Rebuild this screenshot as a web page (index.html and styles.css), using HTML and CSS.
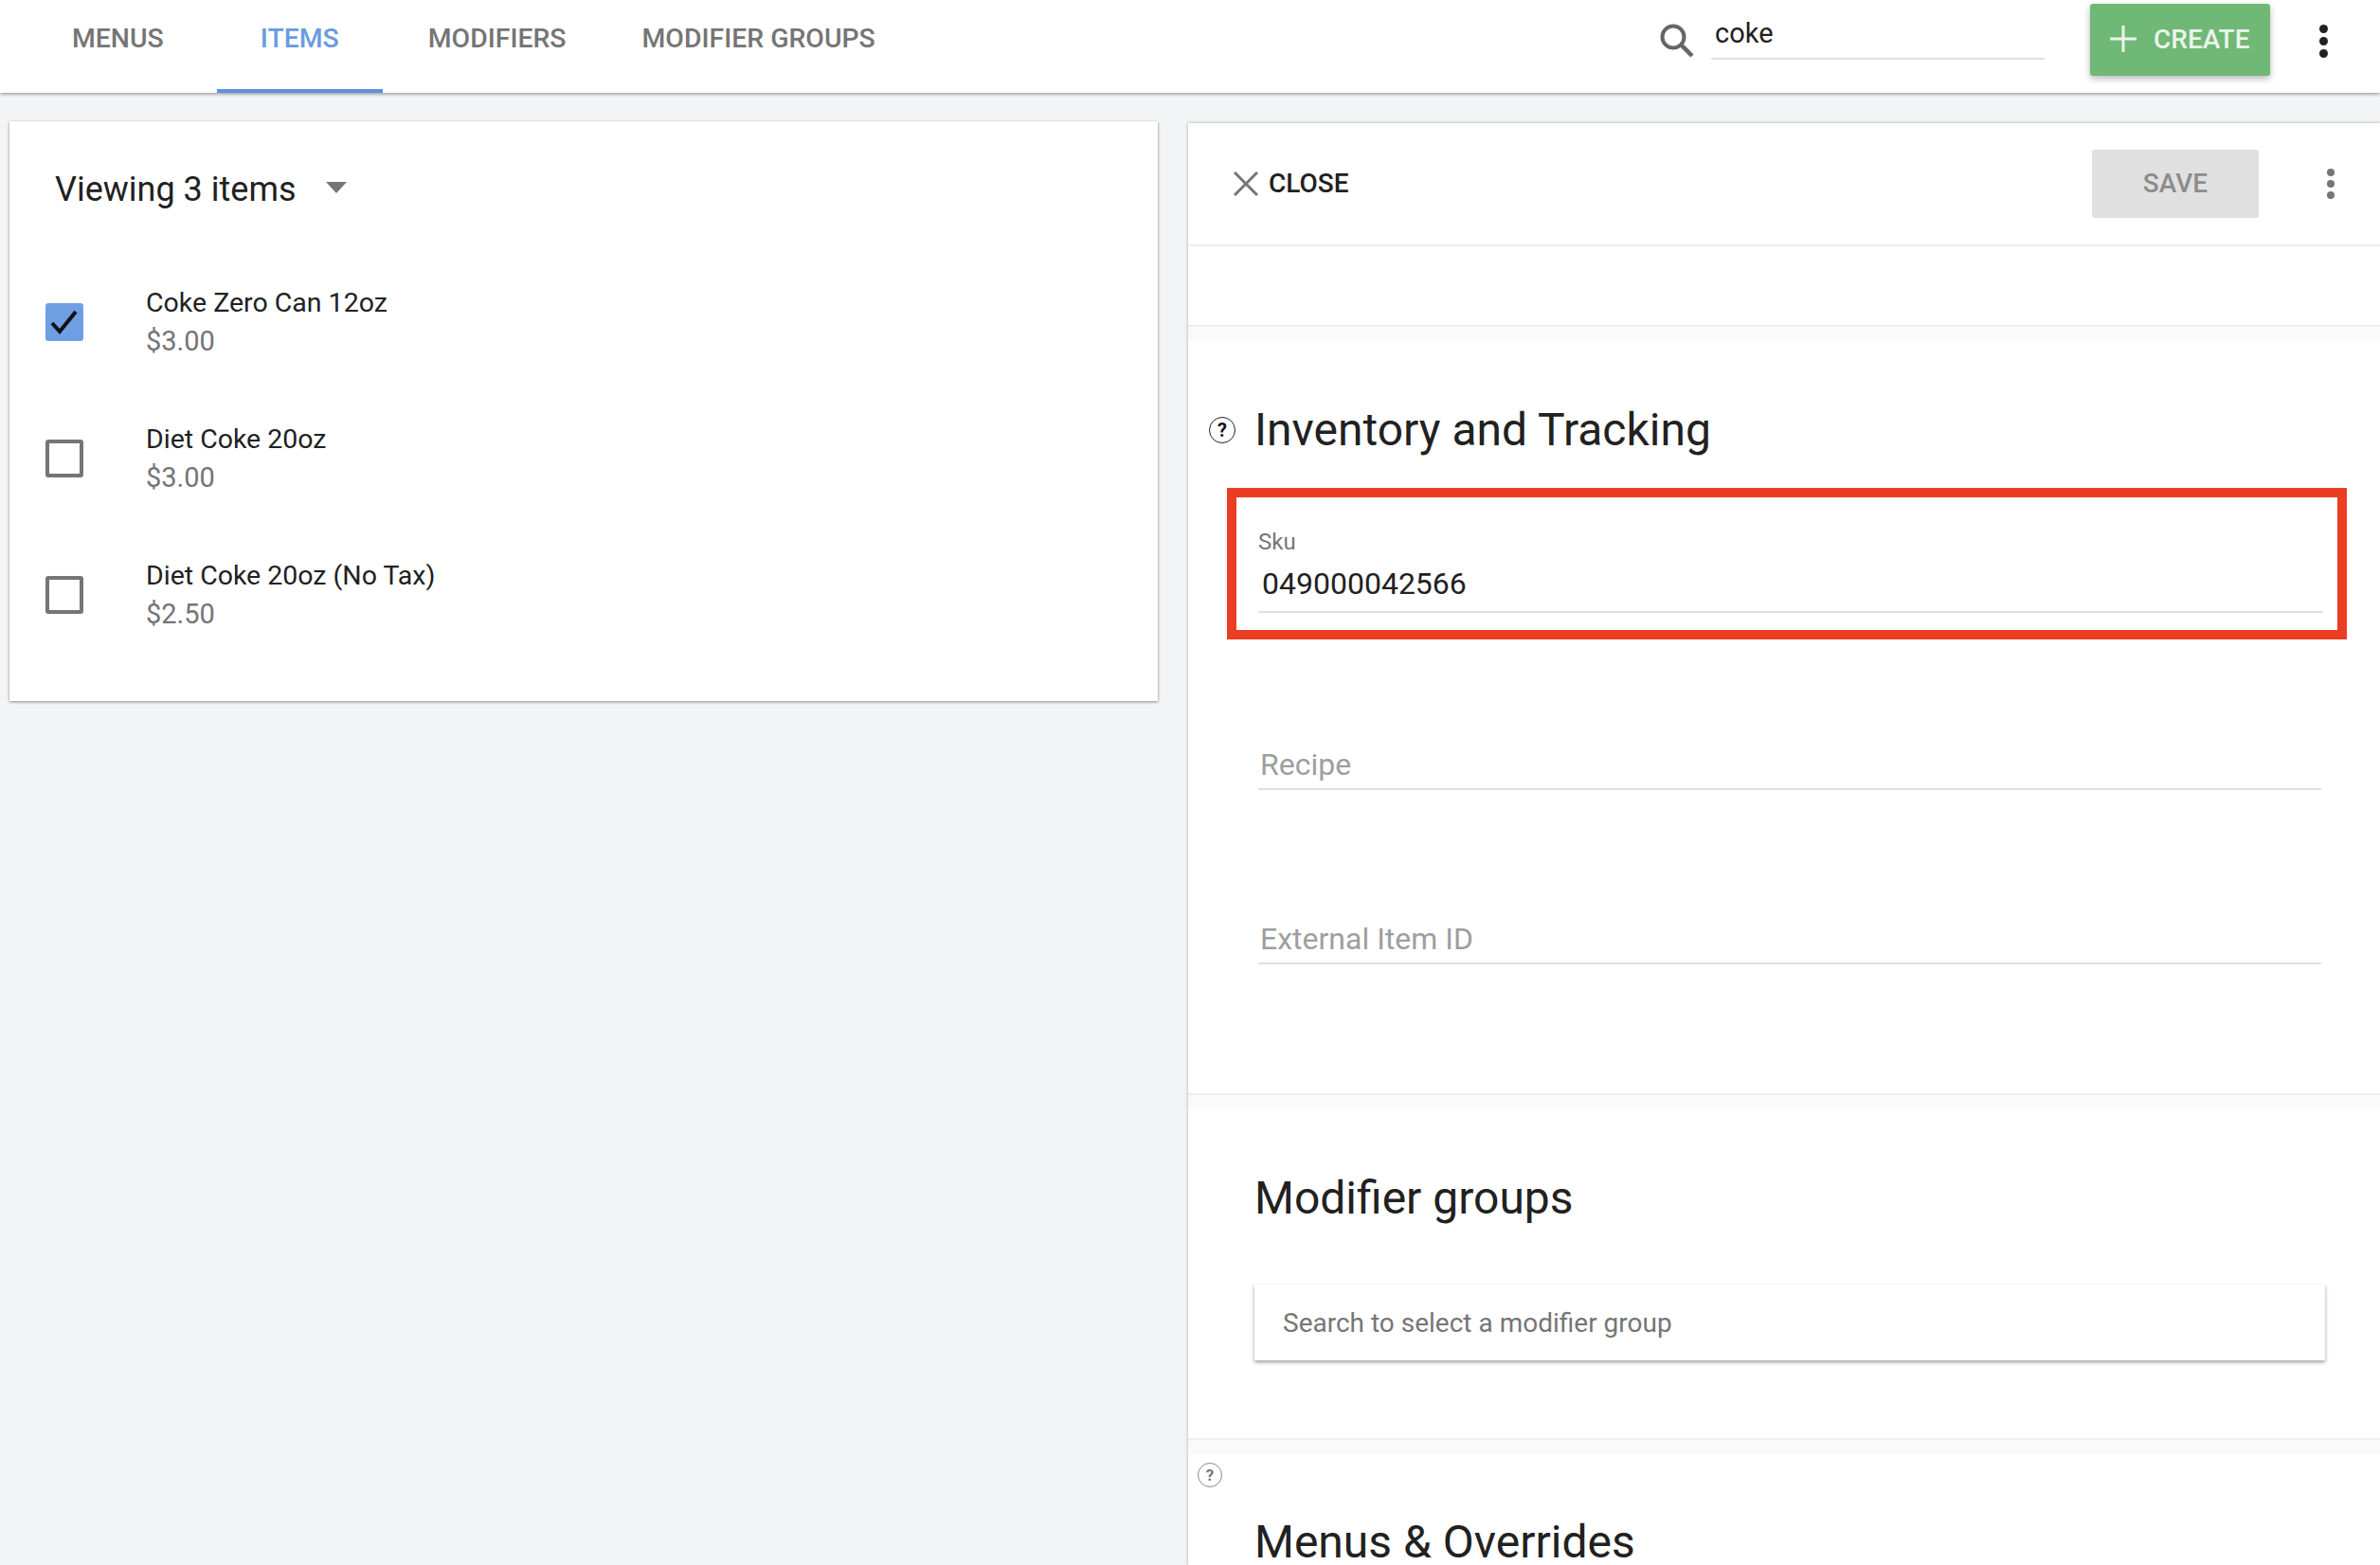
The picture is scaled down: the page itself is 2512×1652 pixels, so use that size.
FILE: index.html
```html
<!DOCTYPE html>
<html lang="en">
<head>
<meta charset="utf-8">
<title>Items</title>
<link rel="stylesheet" href="styles.css">
</head>
<body>
<header class="topbar">
  <nav class="tabs">
    <a class="tab tab-menus">MENUS</a>
    <a class="tab tab-items">ITEMS</a>
    <a class="tab tab-modifiers">MODIFIERS</a>
    <a class="tab">MODIFIER GROUPS</a>
  </nav>
  <div class="top-actions">
    <svg class="search-icon" viewBox="0 0 36 36"><circle cx="14" cy="14" r="11.5" fill="none" stroke="#666" stroke-width="4"/><path d="M22.5 22.5 34 34" stroke="#666" stroke-width="4.5" fill="none"/></svg>
    <div class="search-field">coke</div>
    <button class="create-btn">
      <svg class="plus-icon" viewBox="0 0 30 30"><path d="M15 1v28M1 15h28" stroke="#eaf5eb" stroke-width="3" fill="none"/></svg>
      <span>CREATE</span>
    </button>
    <span class="dots dots-dark"><i></i><i></i><i></i></span>
  </div>
</header>
<main class="content">
  <section class="list-card">
    <div class="list-title">
      <span>Viewing 3 items</span>
      <svg class="caret" viewBox="0 0 22 12"><path d="M0 0h22L11 12z" fill="#757575"/></svg>
    </div>
    <div class="row">
      <span class="check check-on"><svg viewBox="0 0 40 40"><path d="M7 21l8 9L32 9" fill="none" stroke="#111" stroke-width="4"/></svg></span>
      <div><div class="row-name">Coke Zero Can 12oz</div><div class="row-price">$3.00</div></div>
    </div>
    <div class="row">
      <span class="check"></span>
      <div><div class="row-name">Diet Coke 20oz</div><div class="row-price">$3.00</div></div>
    </div>
    <div class="row">
      <span class="check"></span>
      <div><div class="row-name">Diet Coke 20oz (No Tax)</div><div class="row-price">$2.50</div></div>
    </div>
  </section>
  <aside class="panel">
    <div class="panel-head">
      <div class="close">
        <svg class="close-icon" viewBox="0 0 26 26"><path d="M1 1l24 24M25 1L1 25" stroke="#757575" stroke-width="3" fill="none"/></svg>
        <span>CLOSE</span>
      </div>
      <div class="panel-actions">
        <button class="save-btn">SAVE</button>
        <span class="dots dots-gray"><i></i><i></i><i></i></span>
      </div>
    </div>
    <div class="spacer-section"></div>
    <div class="strip"></div>
    <section class="inventory">
      <div class="heading-row">
        <span class="help help-lg">?</span>
        <h2 class="heading">Inventory and Tracking</h2>
      </div>
      <div class="highlight">
        <div class="float-label">Sku</div>
        <div class="field-value">049000042566</div>
      </div>
      <div class="field field-recipe">Recipe</div>
      <div class="field field-external">External Item ID</div>
    </section>
    <div class="strip"></div>
    <section class="modifiers">
      <h2 class="heading">Modifier groups</h2>
      <div class="picker">Search to select a modifier group</div>
    </section>
    <div class="strip"></div>
    <section class="overrides">
      <span class="help help-sm">?</span>
      <h2 class="heading">Menus &amp; Overrides</h2>
    </section>
  </aside>
</main>
</body>
</html>
```

FILE: styles.css
```css
* { box-sizing: border-box; }
html, body { margin: 0; height: 1652px; overflow: hidden; }
body { background: #f3f4f6; font-family: Roboto, "Liberation Sans", sans-serif; color: #212121; }

.topbar { height: 98px; background: #fff; display: flex; justify-content: space-between; box-shadow: 0 1px 4px rgba(0,0,0,.45); position: relative; z-index: 2; }
.tabs { display: flex; padding-left: 76px; }
.tab { height: 98px; line-height: 82px; font-size: 28.4px; font-weight: 500; color: #757575; }
.tab-menus { margin-right: 56px; }
.tab-items { color: #6a9be0; border-bottom: 4px solid #5f92df; padding: 0 46px; margin-right: 48px; }
.tab-modifiers { margin-right: 80px; }

.top-actions { display: flex; align-items: flex-start; padding-right: 55px; }
.search-icon { width: 36px; height: 36px; margin-top: 25px; margin-right: 18px; }
.search-field { width: 352px; height: 63px; border-bottom: 2px solid #e0e0e0; font-size: 29px; line-height: 70px; padding-left: 4px; margin-right: 48px; }
.create-btn { width: 190px; height: 76px; margin-top: 4px; margin-right: 52px; background: #70b875; color: #eaf5eb; border: 0; border-radius: 3px; box-shadow: 0 3px 7px rgba(0,0,0,.28); display: flex; align-items: center; padding: 0 0 2px 20px; font: 500 28px Roboto, sans-serif; }
.plus-icon { width: 30px; height: 30px; margin-right: 17px; }

.dots { display: flex; flex-direction: column; gap: 4px; width: 8px; }
.dots i { width: 8px; height: 8px; border-radius: 50%; }
.dots-dark { margin-top: 26px; width: 9px; }
.dots-dark i { background: #212121; width: 9px; height: 9px; }
.dots-gray i { background: #757575; }

.content { display: flex; align-items: flex-start; padding: 30px 0 0 10px; gap: 32px; }
.list-card { width: 1212px; height: 612px; background: #fff; box-shadow: 0 1px 3px rgba(0,0,0,.45); flex: none; }
.list-title { height: 140px; display: flex; align-items: center; padding: 4px 0 0 48px; font-size: 36px; }
.caret { width: 22px; height: 12px; margin-left: 31px; margin-top: -4px; }
.row { height: 144px; display: flex; align-items: center; padding-left: 38px; }
.check { width: 40px; height: 40px; border: 4px solid #757575; border-radius: 3px; margin-right: 66px; flex: none; }
.check-on { background: #6f9fe3; border: 0; }
.check-on svg { display: block; width: 40px; height: 40px; }
.row-name { font-size: 28.5px; line-height: 40px; }
.row-price { font-size: 29px; line-height: 40px; color: #757575; }

.panel { width: 1258px; height: 1522px; overflow: hidden; margin-top: 2px; background: #fff; box-shadow: 0 0 3px rgba(0,0,0,.35); flex: none; }
.panel-head { height: 130px; border-bottom: 2px solid #eee; display: flex; justify-content: space-between; align-items: flex-start; }
.close { display: flex; align-items: center; padding: 47px 0 0 48px; font-size: 28px; font-weight: 500; }
.close-icon { width: 26px; height: 26px; margin-right: 11px; }
.panel-actions { display: flex; align-items: flex-start; padding-top: 28px; padding-right: 48px; }
.save-btn { width: 176px; height: 72px; border: 0; border-radius: 3px; background: #e0e0e0; color: #8c8c8c; padding: 0 0 2px; font: 500 28px Roboto, sans-serif; margin-right: 72px; }
.dots-gray { margin-top: 20px; }
.spacer-section { height: 83px; }
.strip { height: 17px; background: #fafafa; border-top: 2px solid #eee; }

.heading-row { display: flex; align-items: center; padding-left: 22px; gap: 20px; }
.heading { margin: 0; font-size: 48px; line-height: 60px; font-weight: 400; }
.help { display: block; border: 1px solid #444; border-radius: 50%; text-align: center; font-weight: 700; }
.help-lg { width: 28px; height: 28px; font-size: 20px; line-height: 26px; color: #111; border-color: #222; }
.help-sm { width: 26px; height: 26px; font-size: 17px; line-height: 24px; color: #777; border-color: #888; margin: 0 0 0 10px; }

.inventory { height: 794px; padding-top: 64px; }
.highlight { width: 1182px; height: 160px; margin: 31px 0 0 41px; border: 10px solid #ea3d24; padding: 33px 15px 0 23px; }
.float-label { font-size: 24px; line-height: 28px; color: #757575; margin-bottom: 8px; }
.field-value { font-size: 32px; line-height: 44px; padding: 0 0 0 4px; height: 53px; border-bottom: 2px solid #e0e0e0; }
.field { margin-left: 74px; width: 1122px; font-size: 32px; color: #9e9e9e; line-height: 38px; border-bottom: 2px solid #e0e0e0; padding-left: 2px; height: 46px; }
.field-recipe { margin-top: 113px; }
.field-external { margin-top: 138px; }

.modifiers { height: 347px; padding: 64px 0 0 70px; }
.picker { width: 1130px; height: 80px; margin-top: 61px; background: #fff; box-shadow: 0 2px 4px rgba(0,0,0,.4); font-size: 28px; line-height: 81px; padding-left: 30px; color: #757575; }
.overrides { padding: 9px 0 0 0; }
.overrides .heading { line-height: 48px; margin: 34px 0 0 70px; }
```
